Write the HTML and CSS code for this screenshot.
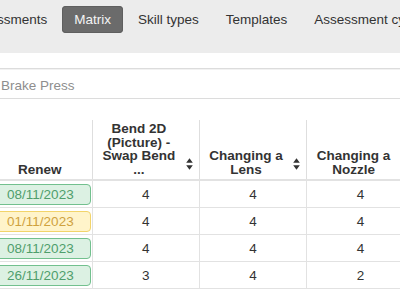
FILE: index.html
```html
<!DOCTYPE html>
<html lang="en">
<head>
<meta charset="utf-8">
<title>Matrix</title>
<link rel="stylesheet" href="styles.css">
</head>
<body>
<nav class="topnav">
  <ul class="tabs">
    <li class="tab">Assessments</li>
    <li class="tab active">Matrix</li>
    <li class="tab">Skill types</li>
    <li class="tab">Templates</li>
    <li class="tab">Assessment cycles</li>
  </ul>
</nav>
<div class="filter">
  <input class="search" type="text" placeholder="Brake Press">
</div>
<div class="matrix-wrap">
  <table class="matrix">
    <colgroup>
      <col class="c-renew">
      <col class="c-skill">
      <col class="c-skill">
      <col class="c-skill">
    </colgroup>
    <thead>
      <tr>
        <th class="renew">Renew</th>
        <th class="skill">Bend 2D (Picture) - Swap Bend ...<svg class="sort" viewBox="0 0 7 12" width="7" height="12"><path d="M3.5 0.3 L6.8 4.8 H0.2 Z M3.5 11.7 L0.2 7.2 H6.8 Z"/></svg></th>
        <th class="skill">Changing a Lens<svg class="sort" viewBox="0 0 7 12" width="7" height="12"><path d="M3.5 0.3 L6.8 4.8 H0.2 Z M3.5 11.7 L0.2 7.2 H6.8 Z"/></svg></th>
        <th class="skill">Changing a Nozzle<svg class="sort" viewBox="0 0 7 12" width="7" height="12"><path d="M3.5 0.3 L6.8 4.8 H0.2 Z M3.5 11.7 L0.2 7.2 H6.8 Z"/></svg></th>
      </tr>
    </thead>
    <tbody>
      <tr><td class="renew"><span class="badge ok">08/11/2023</span></td><td>4</td><td>4</td><td>4</td></tr>
      <tr><td class="renew"><span class="badge due">01/11/2023</span></td><td>4</td><td>4</td><td>4</td></tr>
      <tr><td class="renew"><span class="badge ok">08/11/2023</span></td><td>4</td><td>4</td><td>4</td></tr>
      <tr><td class="renew"><span class="badge ok">26/11/2023</span></td><td>3</td><td>4</td><td>2</td></tr>
    </tbody>
  </table>
</div>
</body>
</html>
```
FILE: styles.css
```css
html, body {
  margin: 0;
  padding: 0;
}
body {
  width: 400px;
  height: 300px;
  overflow: hidden;
  background: #fff;
  color: #333;
  font-family: "Liberation Sans", Arial, Helvetica, sans-serif;
  font-size: 13.5px;
}

/* top navigation */
.topnav {
  background: #ececec;
  height: 53px;
  box-sizing: border-box;
  padding-top: 6px;
}
.tabs {
  list-style: none;
  margin: 0 0 0 -45px;
  padding: 0;
  display: flex;
  gap: 3px;
  white-space: nowrap;
}
.tab {
  height: 27px;
  line-height: 27px;
  padding: 0 12px;
  border-radius: 4px;
  color: #333;
}
.tab.active {
  background: #6b6b6b;
  color: #f4f4f4;
  box-shadow: inset 0 0 0 1px #5f5f5f;
}

/* filter */
.filter {
  margin: 15px 0 0 -10px;
}
.search {
  display: block;
  width: 430px;
  height: 31px;
  box-sizing: border-box;
  margin: 0;
  padding: 3px 0 0 10px;
  border: 1px solid #dcdcdc;
  box-shadow: inset 0 1px 0 #f2f2f2;
  font-family: inherit;
  font-size: 13.5px;
  color: #333;
  background: #fff;
  outline: none;
}
.search::placeholder {
  color: #8e8e8e;
}

/* matrix table */
.matrix-wrap {
  margin: 21px 0 0 -12px;
}
.matrix {
  border-collapse: collapse;
  table-layout: fixed;
  width: 426px;
}
.c-renew { width: 104px; }
.c-skill { width: 107px; }

.matrix th {
  position: relative;
  height: 56px;
  padding: 0 20px 3px 6px;
  vertical-align: bottom;
  text-align: center;
  font-weight: bold;
  font-size: 13.5px;
  line-height: 13.5px;
  color: #333;
  border-left: 1px solid #dedede;
  border-bottom: 2px solid #e2e2e2;
}
.matrix th.renew {
  padding: 0 4px 3px;
  border-left: none;
}
.sort {
  position: absolute;
  right: 6px;
  bottom: 9px;
  fill: #333;
}

.matrix td {
  height: 26px;
  padding: 0;
  text-align: center;
  vertical-align: middle;
  border-left: 1px solid #e2e2e2;
  border-bottom: 1px solid #e2e2e2;
  color: #333;
}
.matrix td.renew {
  border-left: none;
}
.badge {
  display: block;
  height: 21px;
  line-height: 19px;
  margin: 0 1px 0 2px;
  box-sizing: border-box;
  border: 1px solid;
  border-radius: 4px;
  font-size: 13.5px;
}
.badge.ok {
  background: #dcf1e3;
  border-color: #72c08e;
  color: #4f9e6c;
}
.badge.due {
  background: #fff4ca;
  border-color: #f2d46a;
  color: #cfa23e;
}
```
